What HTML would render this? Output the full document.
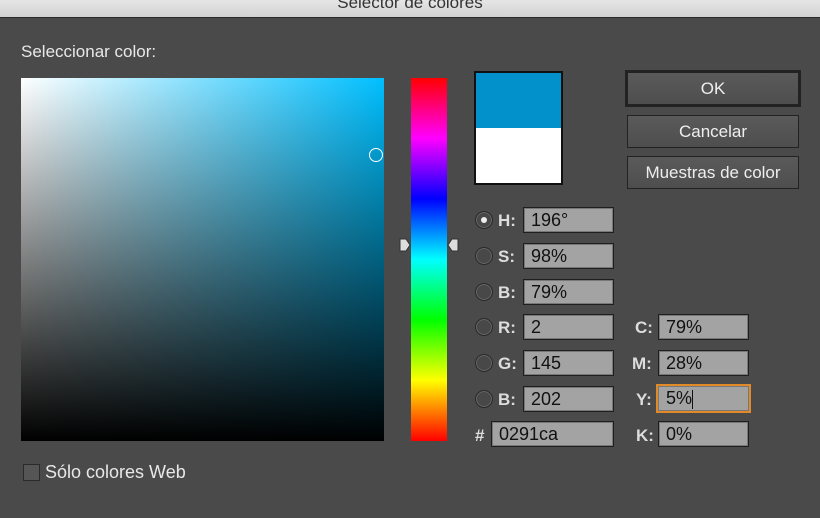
<!DOCTYPE html>
<html><head><meta charset="utf-8"><style>
*{margin:0;padding:0;box-sizing:border-box}
body{width:820px;height:518px;background:#4a4a4a;position:relative;overflow:hidden;font-family:"Liberation Sans",sans-serif;color:#e8e8e8;font-size:16px}
.tb{position:absolute;left:0;top:0;width:820px;height:18px;background:linear-gradient(#e6e6e6,#d2d2d2);border-bottom:1px solid #2a2a2a}
.tb span{position:absolute;left:0;width:820px;text-align:center;top:-7px;color:#333;font-size:17px}
.abs{position:absolute}
.sq{left:21px;top:78px;width:363px;height:363px;background:linear-gradient(to top,#000,rgba(0,0,0,0)),linear-gradient(to right,#fff,#00bfff)}
.hue{left:411px;top:78px;width:36px;height:363px;background:linear-gradient(#f00,#f0f 16.6%,#00f 33.3%,#0ff 50%,#0f0 66.6%,#ff0 83.3%,#f00)}
.sw{left:474px;top:71px;width:89px;height:114px;border:2px solid #111;background:linear-gradient(#0291ca 0,#0291ca 50%,#fff 50%)}
.btn{position:absolute;background:linear-gradient(#5a5a5a,#4e4e4e);border:1px solid #222;color:#eee;text-align:center;font-size:17px}
.in{position:absolute;height:26px;background:#a3a3a3;border:1px solid #1e1e1e;box-shadow:inset 0 0 0 1px #777;color:#111;font-size:18px;padding-left:7px;line-height:25px}
.rd{position:absolute;width:18px;height:18px;border-radius:50%;background:#484848;border:1px solid #2a2a2a;box-shadow:0 0 0 1px #666 inset}
.lb{position:absolute;font-size:17px;font-weight:bold;color:#ddd}
</style></head><body>
<div class="tb"><span>Selector de colores</span></div>
<div class="abs" style="left:21px;top:42px;font-size:17px">Seleccionar color:</div>
<div class="abs sq"></div>
<div class="abs" style="left:369px;top:148px;width:14px;height:14px;border:1.5px solid #fff;border-radius:50%"></div>
<div class="abs hue"></div>
<svg class="abs" style="left:399px;top:238px" width="60" height="14"><path d="M1 1h6l4 6-4 6H1z" fill="#ddd" stroke="#333"/><path d="M59 1h-6l-4 6 4 6h6z" fill="#ddd" stroke="#333"/></svg>
<div class="abs sw"></div>
<div class="btn" style="left:625px;top:70px;width:176px;height:37px;border:3px solid #222;line-height:31px">OK</div>
<div class="btn" style="left:627px;top:115px;width:172px;height:33px;line-height:31px">Cancelar</div>
<div class="btn" style="left:627px;top:156px;width:172px;height:33px;line-height:31px">Muestras de color</div>

<div class="rd" style="left:475px;top:211px"><div style="position:absolute;left:5px;top:5px;width:6px;height:6px;border-radius:50%;background:#eee"></div></div>
<div class="lb" style="left:498px;top:211px">H:</div><div class="in" style="left:523px;top:207px;width:91px">196°</div>
<div class="rd" style="left:475px;top:247px"></div>
<div class="lb" style="left:498px;top:247px">S:</div><div class="in" style="left:523px;top:243px;width:91px">98%</div>
<div class="rd" style="left:475px;top:283px"></div>
<div class="lb" style="left:498px;top:283px">B:</div><div class="in" style="left:523px;top:279px;width:91px">79%</div>
<div class="rd" style="left:475px;top:318px"></div>
<div class="lb" style="left:498px;top:318px">R:</div><div class="in" style="left:523px;top:314px;width:91px">2</div>
<div class="rd" style="left:475px;top:354px"></div>
<div class="lb" style="left:498px;top:354px">G:</div><div class="in" style="left:523px;top:350px;width:91px">145</div>
<div class="rd" style="left:475px;top:390px"></div>
<div class="lb" style="left:498px;top:390px">B:</div><div class="in" style="left:523px;top:386px;width:91px">202</div>
<div class="lb" style="left:475px;top:426px">#</div><div class="in" style="left:491px;top:421px;width:123px">0291ca</div>

<div class="lb" style="left:635px;top:318px">C:</div><div class="in" style="left:658px;top:314px;width:91px">79%</div>
<div class="lb" style="left:632px;top:354px">M:</div><div class="in" style="left:658px;top:350px;width:91px">28%</div>
<div class="lb" style="left:636px;top:390px">Y:</div><div class="in" style="left:656px;top:384px;width:95px;height:29px;border:2px solid #e08a2a;padding-left:8px">5%<span style="display:inline-block;width:1px;height:19px;background:#111;vertical-align:middle"></span></div>
<div class="lb" style="left:636px;top:426px">K:</div><div class="in" style="left:658px;top:421px;width:91px">0%</div>

<div class="abs" style="left:23px;top:464px;width:17px;height:17px;background:#555;border:1px solid #2a2a2a"></div>
<div class="abs" style="left:45px;top:462px;font-size:18px">Sólo colores Web</div>
</body></html>
